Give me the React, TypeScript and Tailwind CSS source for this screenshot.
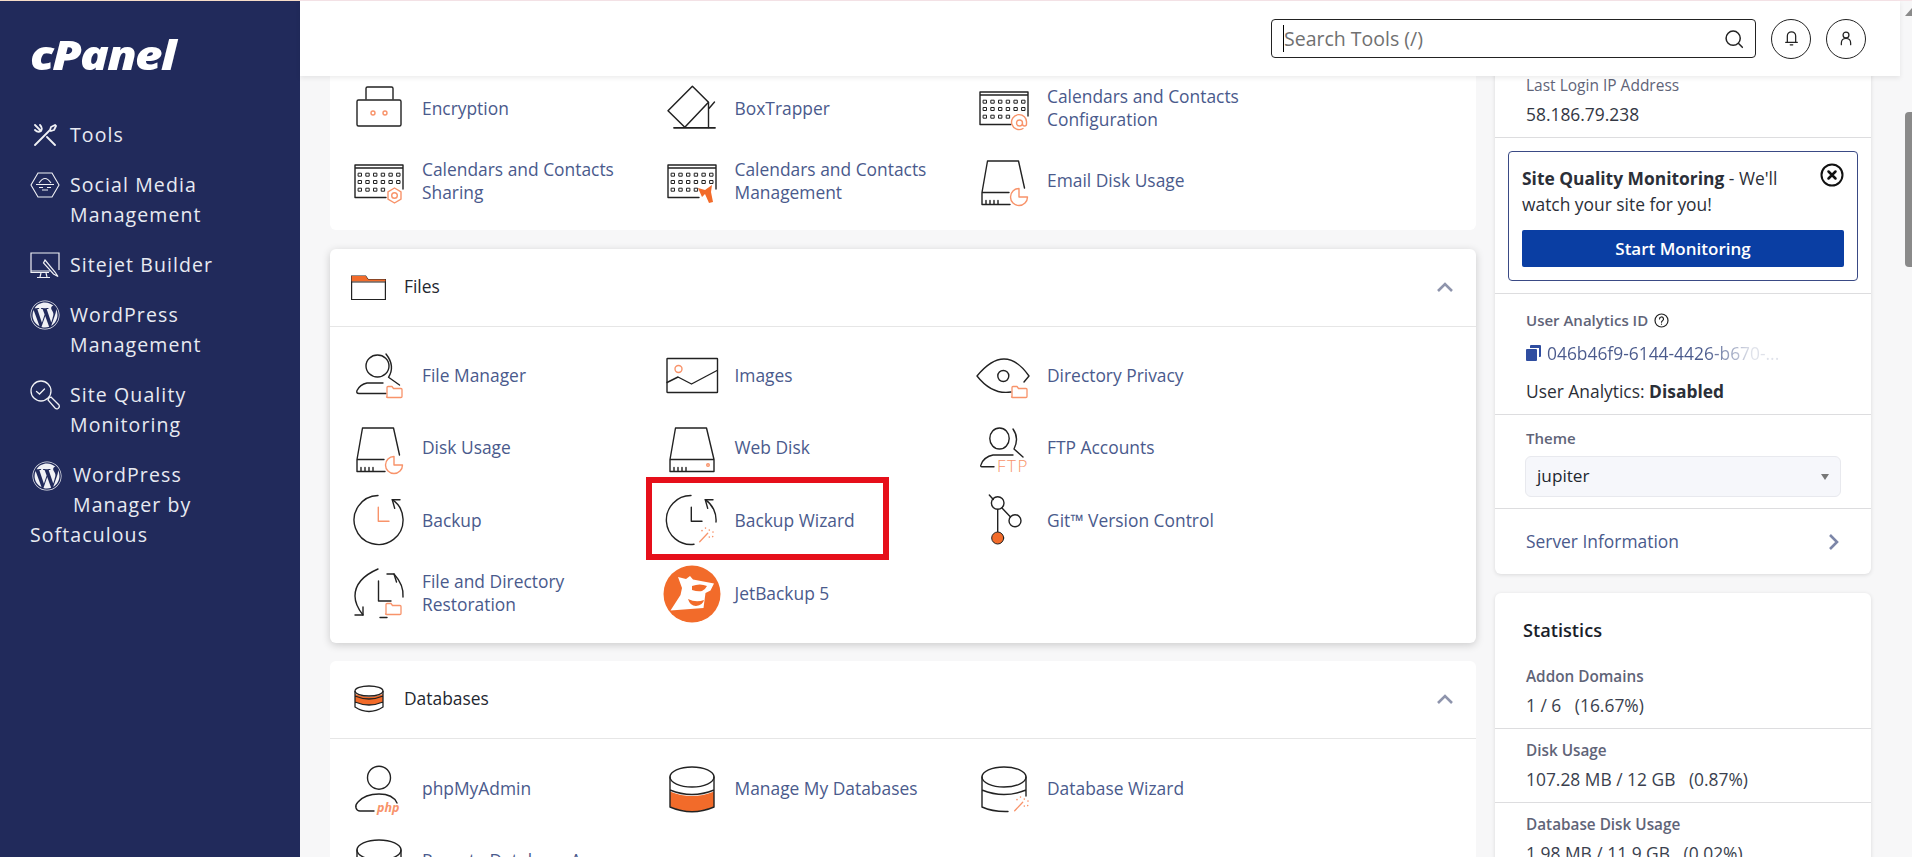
import React from "react";
import { FaWordpress } from "react-icons/fa";

const O = "#f8936a";
const S = "#f26b2a";

function Ic({ children }: { children: React.ReactNode }) {
  return (
    <svg viewBox="0 0 50 50" className="w-[50px] h-[50px] overflow-visible shrink-0" fill="none" stroke="#222" strokeWidth="1.4" strokeLinecap="round" strokeLinejoin="round">
      {children}
    </svg>
  );
}

const FolderBadge = ({ x = 33, y = 36 }: { x?: number; y?: number }) => (
  <path d={`M${x} ${y + 10.5}V${y + 1.5}q0-1 1-1h4l1.5 2h7.5q1 0 1 1v7q0 1-1 1h-13.5q-1 0-1-.5z`} stroke={O} strokeWidth="1.3" fill="#fff" />
);

const Pie = ({ cx = 40, cy = 42 }: { cx?: number; cy?: number }) => (
  <path d={`M${cx} ${cy - 8.5}A8.500 8.500 0 1 0 ${cx + 8.5} ${cy}H${cx}z`} stroke={O} strokeWidth="1.4" fill="#fff" />
);

function Calendar({ badge }: { badge: React.ReactNode }) {
  const rows = [18.7, 26, 33.7];
  const xs = [6, 13.7, 21.4, 29.1, 36.8, 44.5];
  return (
    <Ic>
      <path d="M1 9h48M1 9v32.5h31M49 9v24M1 12h48" />
      {rows.map((y, r) =>
        xs.slice(0, r === 2 ? 4 : 6).map((x) => <rect key={`${r}${x}`} x={x - 1.5} y={y - 1.5} width="3" height="3" stroke="#222" strokeWidth="1" />),
      )}
      {badge}
    </Ic>
  );
}

const IEncryption = () => (
  <Ic>
    <rect x="3" y="17" width="44" height="26" rx="1.5" />
    <path d="M12 16V5.5q0-1.5 1.5-1.5h24q1.5 0 1.5 1.5V16" />
    <circle cx="19" cy="30" r="2" stroke={O} />
    <circle cx="31" cy="30" r="2" stroke={O} />
  </Ic>
);
const IBox = () => (
  <Ic>
    <path d="M25.4 3.3 41.5 19.3 17.8 44.3 1 27.7Z" strokeWidth="1.5" />
    <path d="M41.5 19.5V44.5M41.5 26l6-7" />
    <path d="M7 44.8h41" strokeWidth="1.8" />
  </Ic>
);
const IDisk = ({ badge, full }: { badge?: React.ReactNode; full?: boolean }) => (
  <Ic>
    {full ? (
      <path d="M8.500 5h31l7.500 31.500v12h-44v-12zM3 36.500h44" />
    ) : (
      <path d="M8.500 5h31l6 27M8.500 5 3 36.500v12h28M3 36.500h27" />
    )}
    <path d="M7 48v-3.500M11 48v-3.500M15 48v-3.500M19 48v-3.500" />
    {badge}
  </Ic>
);
const IFile = () => (
  <Ic>
    <ellipse cx="23.5" cy="16" rx="11.5" ry="11" />
    <path d="M32 4Q41.500 16 34.500 27.300L45.500 35" />
    <path d="M32 43.5H5q-3 0-2-3 3-6 10-7.500h16" />
    <FolderBadge />
  </Ic>
);
const IImages = () => (
  <Ic>
    <rect x="0" y="8.5" width="50.5" height="34" rx=".5" />
    <circle cx="11.5" cy="19" r="3.5" stroke={O} />
    <path d="M0 32.5l11-5.5 13.5 7L50 20.5" />
  </Ic>
);
const IEye = () => (
  <Ic>
    <path d="M32 42Q13 45 -2 26 12 9 25 9t25 17l-5 6" />
    <circle cx="24.3" cy="26" r="5.5" />
    <FolderBadge x={33} y={36} />
  </Ic>
);
const IFtp = () => (
  <Ic>
    <ellipse cx="20.5" cy="15.500" rx="9.700" ry="10.500" />
    <path d="M34 6q6.500 9 1 20l9 8" />
    <path d="M15 43.700H3q-2 0-1-2 3-8 12-9.700h20" />
    <text x="18" y="49" fontFamily="'Open Sans',sans-serif" fontSize="17" fontWeight="300" letterSpacing="1.500" fill={O} stroke="none">FTP</text>
  </Ic>
);
const IBackup = () => (
  <Ic>
    <path d="M24 .5A24.5 24.5 0 1 0 38.3 4.7" />
    <path d="M38.3 4.7H46M38.3 4.7l2.4 8.7" />
    <path d="M24.3 12.3v14H35" stroke={O} />
  </Ic>
);
const Wand = ({ x = 0, y = 0 }: { x?: number; y?: number }) => (
  <g stroke={O} transform={`translate(${x} ${y})`}>
    <path d="M32.7 46.7l8-8.4" strokeWidth="1.3" />
    <path d="M35 35.6v.1M42.3 35v.1M46 37v.1M45.7 41.5v.1M42.3 42v.1M38.5 33v.1" strokeWidth="1.6" />
  </g>
);
const IWizard = () => (
  <Ic>
    <path d="M24 .5A24.5 24.5 0 1 0 27 49.3M49 27A24.5 24.5 0 0 0 38.3 4.7" />
    <path d="M38.3 4.7H46M38.3 4.7l2.4 8.7" />
    <path d="M24.3 12.3v14H35" />
    <Wand />
  </Ic>
);
const IRestore = () => (
  <Ic>
    <path d="M24 1Q1 11 1 28q0 9 8 19M49 29Q50 17 40 6" />
    <path d="M9 47H1M9 47v-8M40 6H33M40 6l2.5 8M26 49.5h7" />
    <path d="M24.5 13v20H37" />
    <FolderBadge x={32} y={35} />
  </Ic>
);
const IGit = () => (
  <Ic>
    <path d="M10.3 0l4 4.5" />
    <circle cx="18.7" cy="8" r="6.3" />
    <circle cx="36" cy="25.7" r="6" />
    <path d="M23 13l8.5 9M18.7 14.5V37" />
    <circle cx="18.7" cy="43" r="6" fill={S} stroke="#222" strokeWidth="1" />
  </Ic>
);
const IJet = () => (
  <Ic>
    <circle cx="25" cy="26" r="28.5" fill={S} stroke="none" />
    <path d="M11 9l8 2 4-3 3 3.500 21 4-3.500 7-5 2.500-2 15-33 2.500 10-15.500 1.500-7z" fill="#fff" stroke="none" />
    <path d="M25 18q8-3 15 0-2 4-5 5-4 1-10-1zM21 31q8 4 16 1-1 5-8 6-6 0-8-7z" fill={S} stroke="none" />
  </Ic>
);
const IPhp = () => (
  <Ic>
    <ellipse cx="25" cy="14.700" rx="11.500" ry="11.500" />
    <path d="M43 40q-4-9-18-9t-21 8q-3 3-2 6 1 3 4 3h14" />
    <text x="23" y="49" fontFamily="'Open Sans',sans-serif" fontStyle="italic" fontWeight="700" fontSize="12.500" fill={O} stroke="none">php</text>
  </Ic>
);
const IManageDb = () => (
  <Ic>
    <path d="M3 28.500q22 9 44 0v15q-22 10-44 0z" fill={S} stroke="none" />
    <ellipse cx="25" cy="14" rx="22" ry="10" />
    <path d="M3 14v30q22 9.500 44 0V14M3 27q22 9 44 0" />
  </Ic>
);
const IDbWizard = () => (
  <Ic>
    <ellipse cx="25" cy="14" rx="22" ry="10" />
    <path d="M3 14v30q11 5 26 4.500M47 14v19M3 27q22 9 44 0" />
    <Wand x={3} y={1} />
  </Ic>
);
const IRemoteDb = () => (
  <Ic>
    <ellipse cx="25" cy="14" rx="22" ry="10" />
    <path d="M3 14v30q22 9.500 44 0V14" />
  </Ic>
);

type Item = { icon: React.ReactNode; label: React.ReactNode; mark?: boolean };

function Cell({ icon, label, mark }: Item) {
  return (
    <div className="relative flex h-[72.6px] items-center gap-[18px]">
      {icon}
      <span className="text-[17.4px] leading-[23px] text-[#4a5a8c]">{label}</span>
      {mark && <div className="absolute left-[-21px] top-[-7px] h-[83px] w-[243px] border-[6px] border-[#e60f1a]" />}
    </div>
  );
}

function Grid({ items }: { items: Item[] }) {
  return (
    <div className="grid grid-cols-[312.5px_312.5px_312.5px] pl-[24px]">
      {items.map((it, i) => (
        <Cell key={i} {...it} />
      ))}
    </div>
  );
}

function Chevron() {
  return (
    <svg width="18" height="10" viewBox="0 0 18 10" fill="none" stroke="#8e94ac" strokeWidth="2.600" className="mr-[22px]">
      <path d="M2 9l7-7 7 7" />
    </svg>
  );
}

function CardHead({ icon, title }: { icon: React.ReactNode; title: string }) {
  return (
    <div className="flex h-[78px] items-center border-b border-[#e6e6e6] pl-[21px]">
      <div className="flex w-[35px] justify-center">{icon}</div>
      <span className="ml-[18px] flex-1 pb-[2px] text-[17.4px] text-[#23272f]">{title}</span>
      <Chevron />
    </div>
  );
}

const Side = ({ icon, children }: { icon: React.ReactNode; children: React.ReactNode }) => (
  <div className="flex items-start gap-[10px] text-[19.5px] leading-[30px] tracking-[1.1px] text-[#e8eaf2]">
    <div className="flex h-[30px] w-[30px] shrink-0 items-center justify-center">{icon}</div>
    <div>{children}</div>
  </div>
);

const Wp = ({ s = 30 }: { s?: number }) => <FaWordpress size={s} color="#f0f1f5" />;

const Label = ({ children }: { children: React.ReactNode }) => (
  <div className="text-[15.3px] font-semibold leading-[20px] text-[#5f6478]">{children}</div>
);
const Value = ({ children }: { children: React.ReactNode }) => (
  <div className="mb-px mt-[7px] whitespace-pre text-[17.4px] leading-[24px] text-[#3a3f4e]">{children}</div>
);

export default function App() {
  return (
    <div className="flex h-[857px] w-[1912px] flex-col overflow-hidden bg-[#f7f7f8] font-['Open_Sans',sans-serif]">
      <div className="flex h-px shrink-0">
        <div className="w-[300px] bg-[#f6dcc8]" />
        <div className="flex-1 bg-[#f6e4e8]" />
      </div>
      <div className="flex min-h-0 flex-1">
        <aside className="w-[300px] shrink-0 bg-[#212a5b] pl-[30px]">
          <div className="mt-[34px] h-[38px] origin-left scale-x-[1.16] text-[41px] font-extrabold italic leading-[38px] tracking-[-1.500px] text-white">cPanel</div>
          <div className="mt-[47px] flex flex-col gap-[20px]">
            <Side
              icon={
                <svg width="24" height="24" viewBox="0 0 24 24" fill="none" stroke="#f0f1f5" strokeWidth="1.800" strokeLinecap="round" strokeLinejoin="round">
                  <path d="M2 22 17 7M17 7l1-3 4-2 1 1-2 4-3 1zM8 8 3.500 3.500M2 2l1.500 1.500M8 8q2-3-1-6M8 8Q5 10 2 7M14 14l8 8" />
                </svg>
              }
            >
              Tools
            </Side>
            <Side
              icon={
                <svg width="30" height="26" viewBox="0 0 30 26" fill="none" stroke="#f0f1f5" strokeWidth="1.100">
                  <path d="M8 1h14l7 12-7 12H8L1 13z" />
                  <path d="M9 11q6-9 12 0M6 12.500h18M9 15.500h4M17 15.500h4M12 18h6" />
                </svg>
              }
            >
              Social Media<br />Management
            </Side>
            <Side
              icon={
                <svg width="30" height="27" viewBox="0 0 30 27" fill="none" stroke="#f0f1f5" strokeWidth="1.200">
                  <path d="M20 19H1V1h28v17M1 19v1.500h18M11 21l-1 4M16 21l1 4M7 25.500h13" />
                  <path d="M15 8l10 12 3 4.500-4.500-2.500-10-11z" />
                </svg>
              }
            >
              Sitejet Builder
            </Side>
            <Side icon={<Wp />}>WordPress<br />Management</Side>
            <Side
              icon={
                <svg width="30" height="30" viewBox="0 0 30 30" fill="none" stroke="#f0f1f5" strokeWidth="1.300" strokeLinecap="round">
                  <circle cx="11" cy="11" r="10" />
                  <path d="M6.500 11.500l3 2.500 5-5" />
                  <path d="M19 18l2-1 8 8q1 2-1 3.500-1.500 1-3-.5l-7-8z" />
                </svg>
              }
            >
              Site Quality<br />Monitoring
            </Side>
            <div className="text-[19.5px] leading-[30px] tracking-[1.1px] text-[#e8eaf2]">
              <div className="float-left ml-px mr-[11px] flex h-[60px] w-[31px] items-start justify-center pt-px">
                <Wp />
              </div>
              WordPress<br />Manager by<br />Softaculous
            </div>
          </div>
        </aside>

        <div className="flex min-w-0 flex-1">
          <div className="flex w-[1600px] shrink-0 flex-col">
            <header className="relative z-10 flex h-[75px] shrink-0 items-center bg-white pl-[971px] shadow-[0_2px_5px_rgba(0,0,0,0.08)]">
              <div className="flex h-[39px] w-[485px] items-center rounded-[4px] border border-[#222] pl-[11px] pr-[11px]">
                <span className="h-[27px] border-l border-black" />
                <span className="flex-1 text-[19.5px] text-[#707070]">Search Tools (/)</span>
                <svg width="20" height="20" viewBox="0 0 24 24" fill="none" stroke="#222" strokeWidth="1.800" strokeLinecap="round">
                  <circle cx="11" cy="11" r="8.500" />
                  <path d="M17.500 17.500 22 22" />
                </svg>
              </div>
              <div className="ml-[15px] flex h-[40px] w-[40px] items-center justify-center rounded-full border border-[#222]">
                <svg width="15" height="17" viewBox="0 0 18 20" fill="none" stroke="#222" strokeWidth="1.500" strokeLinecap="round">
                  <path d="M4 14V7a5 5 0 0 1 10 0v7M2 14.500h14M7.500 17.500h3" />
                </svg>
              </div>
              <div className="ml-[15px] flex h-[40px] w-[40px] items-center justify-center rounded-full border border-[#222]">
                <svg width="14" height="17" viewBox="0 0 18 20" fill="none" stroke="#222" strokeWidth="1.600" strokeLinecap="round">
                  <circle cx="9" cy="5.500" r="3.800" />
                  <path d="M3 18v-2q0-6 6-6t6 6v2" />
                </svg>
              </div>
            </header>

            <div className="flex min-h-0 flex-1 overflow-hidden pl-[30px]">
              <main className="-mt-[4px] w-[1146px] shrink-0">
                <section className="rounded-b-[6px] bg-white pb-[12.8px]">
                  <Grid
                    items={[
                      { icon: <IEncryption />, label: "Encryption" },
                      { icon: <IBox />, label: "BoxTrapper" },
                      {
                        icon: (
                          <Calendar
                            badge={
                              <>
                                <path d="M44 45.500a7.500 7.500 0 1 1 3.500-5.500v1q0 2-2 2t-2-2" stroke={O} fill="#fff" />
                                <circle cx="40.500" cy="40" r="3" stroke={O} />
                              </>
                            }
                          />
                        ),
                        label: <>Calendars and Contacts<br />Configuration</>,
                      },
                      {
                        icon: (
                          <Calendar
                            badge={
                              <>
                                <path d="M40.500 32l6.500 3.800v7.400l-6.500 3.800-6.500-3.800v-7.400z" stroke={O} fill="#fff" />
                                <circle cx="40.500" cy="39.500" r="2.800" stroke={O} />
                              </>
                            }
                          />
                        ),
                        label: <>Calendars and Contacts<br />Sharing</>,
                      },
                      {
                        icon: (
                          <Calendar
                            badge={<path d="M31 32l7 2 7-5-1 7 2 10-4 1-4-9-3 3z" fill={S} stroke="none" />}
                          />
                        ),
                        label: <>Calendars and Contacts<br />Management</>,
                      },
                      { icon: <IDisk badge={<Pie cx={40} cy={41} />} />, label: "Email Disk Usage" },
                    ]}
                  />
                </section>

                <section className="mt-[19px] rounded-[6px] bg-white pb-[13.6px] shadow-[0_2px_8px_rgba(0,0,0,0.18)]">
                  <CardHead
                    title="Files"
                    icon={
                      <svg width="35" height="25" viewBox="0 0 35 25" fill="none" stroke="#222" strokeWidth="1.200">
                        <path d="M.6 24.400V1h14l2.500 3.500H34.400v20z" fill="#fff" />
                        <path d="M.6 6.500V1h14l2.500 3.500H34.400v2z" fill={S} stroke="none" />
                        <path d="M.6 7h33.800" />
                      </svg>
                    }
                  />
                  <div className="pt-[12px]">
                    <Grid
                      items={[
                        { icon: <IFile />, label: "File Manager" },
                        { icon: <IImages />, label: "Images" },
                        { icon: <IEye />, label: "Directory Privacy" },
                        { icon: <IDisk badge={<Pie />} />, label: "Disk Usage" },
                        { icon: <IDisk full badge={<circle cx="41" cy="42" r="1.300" stroke={O} />} />, label: "Web Disk" },
                        { icon: <IFtp />, label: "FTP Accounts" },
                        { icon: <IBackup />, label: "Backup" },
                        { icon: <IWizard />, label: "Backup Wizard", mark: true },
                        { icon: <IGit />, label: "Git™ Version Control" },
                        { icon: <IRestore />, label: <>File and Directory<br />Restoration</> },
                        { icon: <IJet />, label: "JetBackup 5" },
                      ]}
                    />
                  </div>
                </section>

                <section className="mt-[18px] rounded-t-[6px] bg-white">
                  <CardHead
                    title="Databases"
                    icon={
                      <svg width="30" height="28" viewBox="0 0 30 28" fill="none" stroke="#222" strokeWidth="1.300">
                        <path d="M1 9q14 6 28 0v8q-14 6-28 0z" fill={S} stroke="none" />
                        <ellipse cx="15" cy="6" rx="14" ry="5" />
                        <path d="M1 6v16q14 9 28 0V6M1 11q14 6 28 0M1 17q14 6 28 0" />
                      </svg>
                    }
                  />
                  <div className="pt-[13px]">
                    <Grid
                      items={[
                        { icon: <IPhp />, label: "phpMyAdmin" },
                        { icon: <IManageDb />, label: "Manage My Databases" },
                        { icon: <IDbWizard />, label: "Database Wizard" },
                        { icon: <IRemoteDb />, label: "Remote Database Access" },
                      ]}
                    />
                  </div>
                </section>
              </main>

              <aside className="-mt-[4px] ml-[19px] w-[376px] shrink-0">
                <section className="rounded-b-[6px] bg-white shadow-[0_1px_4px_rgba(0,0,0,0.12)]">
                  <div className="border-b border-[#dddddf] px-[31px] pb-[11px] pt-[4px]">
                    <div className="text-[15.5px] font-medium leading-[18px] text-[#5f6478]">Last Login IP Address</div>
                    <div className="mt-[8px] text-[17.4px] leading-[24px] text-[#333743]">58.186.79.238</div>
                  </div>
                  <div className="border-b border-[#dddddf] px-[13px] pb-[12px] pt-[13px]">
                    <div className="h-[130px] rounded-[4px] border border-[#3a4a85] px-[13px] pt-[13px]">
                      <div className="flex items-start justify-between">
                        <p className="w-[290px] text-[17.4px] leading-[26px] text-[#2b2f38]">
                          <span className="font-bold">Site Quality Monitoring</span> - We'll watch your site for you!
                        </p>
                        <svg width="24" height="24" viewBox="0 0 24 24" fill="none" stroke="#111" strokeWidth="2" className="mt-[-2px] shrink-0" strokeLinecap="round">
                          <circle cx="12" cy="12" r="10.500" />
                          <path d="M8.500 8.500l7 7M15.500 8.500l-7 7" strokeWidth="2.500" />
                        </svg>
                      </div>
                      <div className="mt-[13px] flex h-[37px] items-center justify-center rounded-[2px] bg-[#0a3ea3] text-[17px] font-semibold text-white">Start Monitoring</div>
                    </div>
                  </div>
                  <div className="border-b border-[#dddddf] px-[31px] pb-[11px] pt-[16px]">
                    <div className="flex h-[20px] items-center gap-[6px] text-[15px] font-semibold text-[#5f6478]">
                      User Analytics ID
                      <svg width="15" height="15" viewBox="0 0 15 15" fill="none" stroke="#222" strokeWidth="1.200" strokeLinecap="round">
                        <circle cx="7.500" cy="7.500" r="6.500" />
                        <path d="M5.500 6a2 2 0 1 1 3 1.700q-1 .6-1 1.500M7.500 11v.2" />
                      </svg>
                    </div>
                    <div className="mt-[11px] flex h-[24px] items-center gap-[6px]">
                      <svg width="15" height="16" viewBox="0 0 15 16" className="shrink-0">
                        <path d="M5 0h9q1 0 1 1v10q0 1-1 1h-1V3H4V1q0-1 1-1z" fill="#2f4da0" />
                        <path d="M1 4h9q1 0 1 1v10q0 1-1 1H1q-1 0-1-1V5q0-1 1-1z" fill="#2f4da0" />
                      </svg>
                      <span className="bg-[linear-gradient(90deg,#4a5a8c_68%,#dfe2ea_88%)] bg-clip-text text-[17.4px] text-transparent">046b46f9-6144-4426-b670-...</span>
                    </div>
                    <div className="mt-[14px] text-[17.4px] leading-[24px] text-[#2b2f38]">
                      User Analytics: <span className="font-bold">Disabled</span>
                    </div>
                  </div>
                  <div className="border-b border-[#dddddf] px-[30px] pb-[11px] pt-[13px]">
                    <div className="pl-px text-[15px] font-semibold leading-[20px] text-[#5f6478]">Theme</div>
                    <div className="mt-[8px] flex h-[41px] items-center justify-between rounded-[6px] border border-[#e8e9ee] bg-[#f6f7fb] pl-[11px] pr-[11px]">
                      <span className="pb-[2px] text-[17.2px] text-[#23272f]">jupiter</span>
                      <span className="h-0 w-0 border-x-[4px] border-t-[6px] border-x-transparent border-t-[#777]" />
                    </div>
                  </div>
                  <div className="flex h-[65px] items-center justify-between pl-[31px] pr-[32px]">
                    <span className="text-[17.4px] text-[#4a5a8c]">Server Information</span>
                    <svg width="11" height="18" viewBox="0 0 11 18" fill="none" stroke="#7c86a8" strokeWidth="2.600">
                      <path d="M2 2l7 7-7 7" />
                    </svg>
                  </div>
                </section>

                <section className="mt-[19px] rounded-t-[6px] bg-white shadow-[0_1px_4px_rgba(0,0,0,0.12)]">
                  <div className="px-[28px] pt-[25px] text-[18.200px] font-semibold leading-[24px] text-[#1a1e2a]">Statistics</div>
                  <div className="mt-[24px] border-b border-[#dddddf] px-[31px] pb-[10px]">
                    <Label>Addon Domains</Label>
                    <Value>1 / 6   (16.67%)</Value>
                  </div>
                  <div className="border-b border-[#dddddf] px-[31px] pb-[10px] pt-[11px]">
                    <Label>Disk Usage</Label>
                    <Value>107.28 MB / 12 GB   (0.87%)</Value>
                  </div>
                  <div className="px-[31px] pt-[11px]">
                    <Label>Database Disk Usage</Label>
                    <Value>1.98 MB / 11.9 GB   (0.02%)</Value>
                  </div>
                </section>
              </aside>
            </div>
          </div>

          <div className="flex flex-1 flex-col items-end">
            <svg width="7" height="8" viewBox="0 0 7 8" className="mt-[7px]">
              <path d="M7 0v8H0z" fill="#8a8a8a" />
            </svg>
            <div className="mt-[96px] h-[155px] w-[7px] rounded-l-[4px] bg-[#8a8a8a]" />
          </div>
        </div>
      </div>
    </div>
  );
}
